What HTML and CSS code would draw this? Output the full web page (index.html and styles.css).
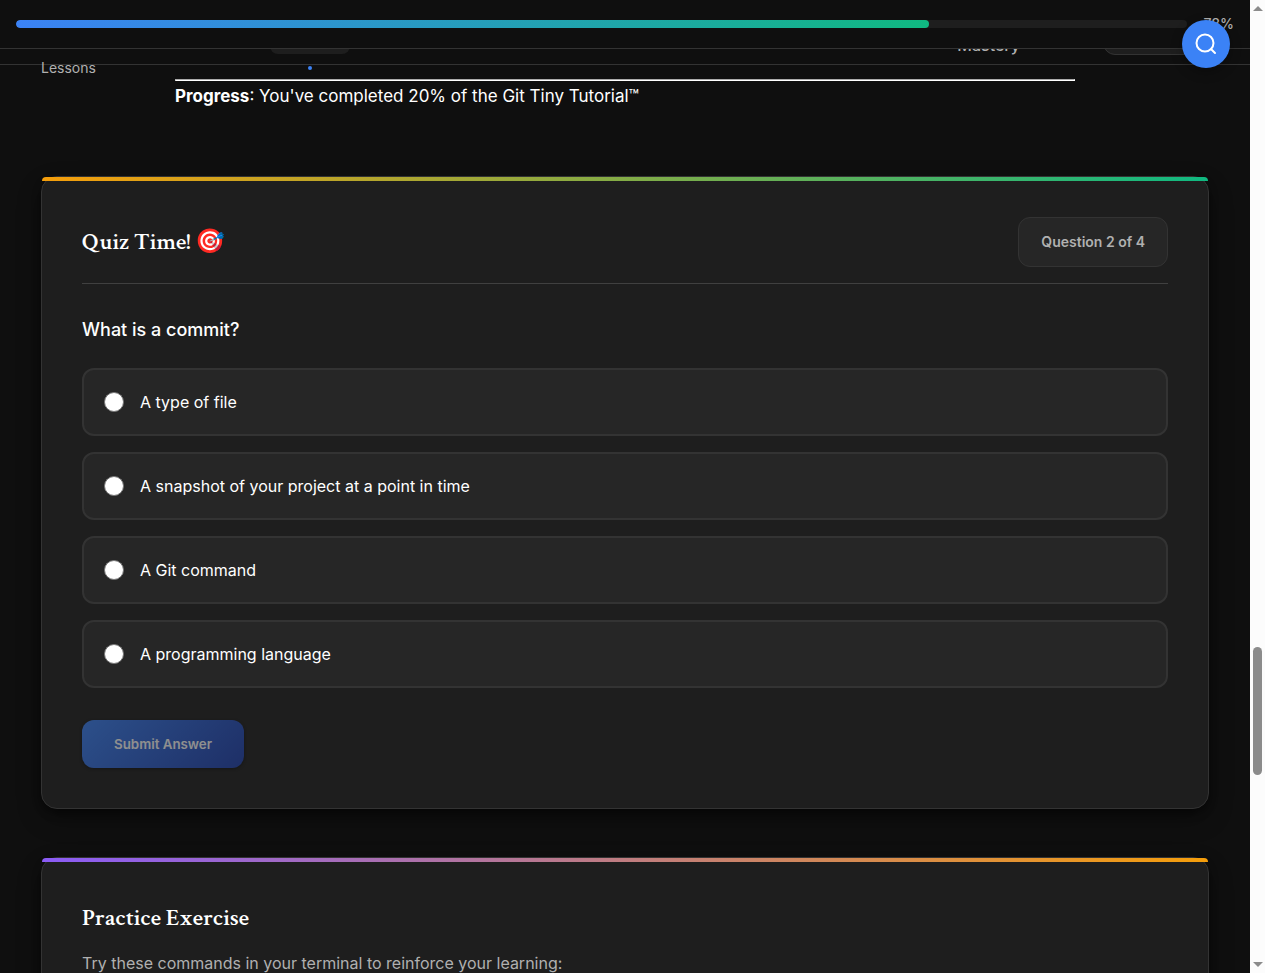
FILE: index.html
```html
<!DOCTYPE html>
<html lang="en">
<head>
<meta charset="utf-8">
<title>Git Tiny Tutorial</title>
<link rel="stylesheet" href="styles.css">
</head>
<body>
<div class="page">
  <header class="site-header">
    <a class="nav-link" href="#lessons">Lessons</a>
    <a class="nav-pill" href="#current" aria-label="Current lesson"></a>
    <a class="nav-mastery" href="#mastery">Mastery</a>
    <button class="nav-button" type="button" aria-label="Menu"></button>
  </header>
  <div class="progress-bar">
    <div class="track"><div class="fill" style="width:77.9%"></div></div>
    <span class="percent">78%</span>
  </div>
  <button class="search" type="button" aria-label="Search">
    <svg viewBox="0 0 24 24" width="24" height="24" fill="none" stroke="currentColor" stroke-width="2" stroke-linecap="round"><circle cx="11" cy="11" r="8.5"/><path d="M17.2 17.2 21 21"/></svg>
  </button>
  <main>
    <section class="lesson">
      <hr>
      <p><strong>Progress</strong>: You've completed 20% of the Git Tiny Tutorial™</p>
    </section>
    <section class="card quiz">
      <div class="quiz-head">
        <h2>Quiz Time! 🎯</h2>
        <span class="counter">Question 2 of 4</span>
      </div>
      <form>
        <fieldset>
          <legend>What is a commit?</legend>
          <label class="option"><input type="radio" name="answer"><span>A type of file</span></label>
          <label class="option"><input type="radio" name="answer"><span>A snapshot of your project at a point in time</span></label>
          <label class="option"><input type="radio" name="answer"><span>A Git command</span></label>
          <label class="option"><input type="radio" name="answer"><span>A programming language</span></label>
        </fieldset>
        <button class="submit" type="submit" disabled>Submit Answer</button>
      </form>
    </section>
    <section class="card practice">
      <h2>Practice Exercise</h2>
      <p>Try these commands in your terminal to reinforce your learning:</p>
    </section>
  </main>
</div>
<div class="scrollbar" aria-hidden="true">
  <span class="arrow up"></span>
  <span class="rail"><span class="thumb"></span></span>
  <span class="arrow down"></span>
</div>
</body>
</html>
```
FILE: styles.css
```css
* { box-sizing: border-box; }
body {
  margin: 0;
  height: 100vh;
  display: flex;
  overflow: hidden;
  background: #0f0f0f;
  color: #fff;
  font-family: Inter, "Liberation Sans", sans-serif;
  font-size: 16px;
  line-height: 24px;
}
.page { position: relative; flex: 1; min-width: 0; overflow: hidden; }

.site-header {
  display: flex;
  align-items: flex-start;
  height: 65px;
  padding: 0 41px;
  border-bottom: 1px solid #333;
}
.site-header a { color: #b0b0b0; text-decoration: none; }
.nav-link { width: 229px; font-size: 14px; padding-top: 56px; }
.nav-pill {
  position: relative;
  width: 80px;
  height: 54px;
  border-radius: 0 0 8px 8px;
  background: #1e1e1e;
}
.nav-pill::after {
  content: "";
  position: absolute;
  bottom: -16px;
  left: 38px;
  width: 4px;
  height: 4px;
  border-radius: 2px;
  background: #3b82f6;
}
.nav-mastery { margin-left: auto; padding-top: 33px; font-weight: 500; }
.nav-button {
  width: 106px;
  height: 55px;
  margin-left: 83px;
  border: 1px solid #333;
  border-radius: 12px;
  background: #1e1e1e;
}

.progress-bar {
  position: absolute;
  top: 0;
  left: 0;
  right: 0;
  display: flex;
  align-items: center;
  gap: 16px;
  height: 49px;
  padding: 0 16px;
  background: #0f0f0f;
  border-bottom: 1px solid #333;
}
.track { flex: 1; height: 8px; border-radius: 4px; background: #1e1e1e; overflow: hidden; }
.fill { height: 100%; border-radius: 4px; background: linear-gradient(90deg, #3b82f6, #10b981); }
.percent { font-size: 14px; font-weight: 500; color: #b0b0b0; }
.search {
  position: absolute;
  top: 20px;
  right: 20px;
  display: grid;
  place-items: center;
  width: 48px;
  height: 48px;
  padding: 0;
  border: 0;
  border-radius: 50%;
  background: #3b82f6;
  color: #fff;
  box-shadow: 0 4px 12px rgba(0, 0, 0, .3);
}

main { padding: 14px 41px 0; }
.lesson { max-width: 900px; margin: 0 auto; font-size: 17px; }
hr { margin: 0; border: 1px inset #fff; }
.lesson p { margin: 3px 0 0; }

.card {
  position: relative;
  padding: 40px;
  border: 1px solid #333;
  border-radius: 16px;
  background: #1e1e1e;
  box-shadow: 0 10px 24px rgba(0, 0, 0, .3), 0 4px 8px rgba(0, 0, 0, .4);
}
.card::before {
  content: "";
  position: absolute;
  top: 0;
  left: 0;
  right: 0;
  height: 4px;
  border-radius: 16px 16px 0 0;
}
.quiz { margin-top: 68px; }
.quiz::before { background: linear-gradient(90deg, #f59e0b, #10b981); }
.practice { margin-top: 48px; }
.practice::before { background: linear-gradient(90deg, #8b5cf6, #f59e0b); }
.quiz-head {
  display: flex;
  align-items: center;
  justify-content: space-between;
  padding-bottom: 16px;
  margin-bottom: 32px;
  border-bottom: 1px solid #404040;
}
h2 {
  margin: 0;
  font-family: "Crimson Text", "Liberation Serif", serif;
  font-size: 24px;
  font-weight: 600;
  line-height: 40px;
}
.counter {
  padding: 12px 22px;
  border: 1px solid #333;
  border-radius: 12px;
  background: #262626;
  color: #b0b0b0;
  font-size: 14px;
  font-weight: 600;
}
fieldset { margin: 0; padding: 0; border: 0; display: grid; gap: 16px; }
legend { padding: 0; margin-bottom: 24px; font-size: 18px; font-weight: 500; line-height: 28px; }
.option {
  display: flex;
  align-items: center;
  gap: 16px;
  height: 68px;
  padding: 0 20px;
  border: 2px solid #333;
  border-radius: 12px;
  background: #262626;
}
.option input {
  appearance: none;
  width: 20px;
  height: 20px;
  margin: 0;
  border: 1px solid #767676;
  border-radius: 50%;
  background: #fff;
}
.submit {
  display: block;
  height: 48px;
  margin-top: 32px;
  padding: 0 32px;
  border: 0;
  border-radius: 12px;
  background: linear-gradient(135deg, #3b82f6, #1e40af);
  box-shadow: 0 1px 3px rgba(0, 0, 0, .5);
  color: #fff;
  font-family: inherit;
  font-weight: 600;
  opacity: .5;
}
.practice p { margin: 13px 0 0; color: #b0b0b0; }

.scrollbar {
  display: flex;
  flex-direction: column;
  align-items: center;
  justify-content: space-between;
  width: 15px;
  padding: 6px 0;
  background: #fcfcfc;
}
.arrow { border: solid transparent; border-width: 0 5px; }
.up { border-bottom: 5px solid #8b8b8b; }
.down { border-top: 5px solid #8b8b8b; }
.rail { flex: 1; display: grid; grid-template-rows: 636fr 128fr 187fr; }
.thumb { grid-row: 2; width: 9px; border-radius: 5px; background: #8b8b8b; }
```
